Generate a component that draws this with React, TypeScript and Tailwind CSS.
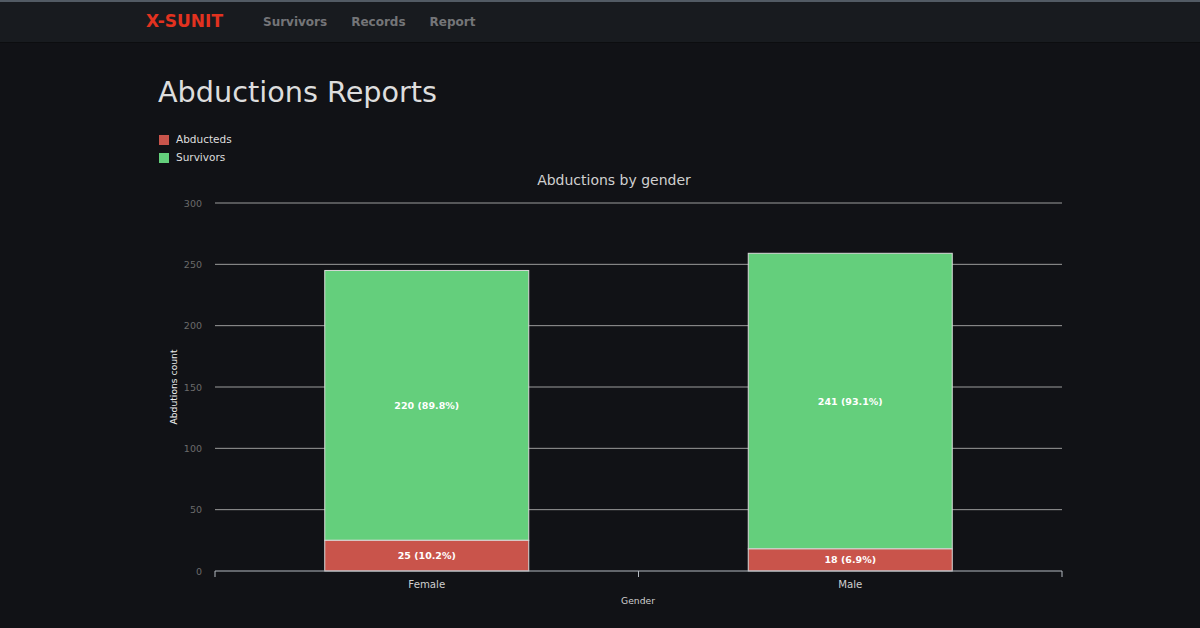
const font = "'DejaVu Sans', Verdana, sans-serif";

const data = [
  { gender: "Female", abducteds: 25, survivors: 220 },
  { gender: "Male", abducteds: 18, survivors: 241 },
];

const ticks = [0, 50, 100, 150, 200, 250, 300];

// chart geometry, in svg-local px
const left = 57;
const right = 904;
const base = 404;
const top = 36;
const yOf = (v: number) => base - (v * (base - top)) / 300;

const BarChart = () => {
  const bandW = (right - left) / data.length;
  const barW = 204;
  return (
    <svg width={910} height={461} className="block overflow-visible" style={{ fontFamily: font }}>
      <text x={456} y={18} textAnchor="middle" fontSize={14} fill="#d0d0d0">
        Abductions by gender
      </text>
      {ticks.map((t) => (
        <g key={t}>
          {t > 0 && <line x1={left} x2={right} y1={yOf(t)} y2={yOf(t)} stroke="#9c9c9c" strokeWidth={1} />}
          <text x={44} y={yOf(t) + 3.5} textAnchor="end" fontSize={9.5} fill="#6b6b6b">
            {t}
          </text>
        </g>
      ))}
      {data.map((d, i) => {
        const total = d.abducteds + d.survivors;
        const x = left + bandW * i + (bandW - barW) / 2;
        const yRed = yOf(d.abducteds);
        const yGreen = yOf(total);
        const pct = (n: number) => ((n / total) * 100).toFixed(1);
        return (
          <g key={d.gender}>
            <rect x={x} y={yGreen} width={barW} height={yRed - yGreen} fill="#64cf7c" stroke="#d9d9d9" strokeWidth={1} />
            <rect x={x} y={yRed} width={barW} height={base - yRed} fill="#c9544b" stroke="#d9d9d9" strokeWidth={1} />
            <text x={x + barW / 2} y={(yGreen + yRed) / 2 + 3.5} textAnchor="middle" fontSize={9.5} fontWeight="bold" fill="#fff">
              {d.survivors} ({pct(d.survivors)}%)
            </text>
            <text x={x + barW / 2} y={(yRed + base) / 2 + 3.5} textAnchor="middle" fontSize={9.5} fontWeight="bold" fill="#fff">
              {d.abducteds} ({pct(d.abducteds)}%)
            </text>
            <text x={x + barW / 2} y={421} textAnchor="middle" fontSize={10.2} fill="#cfcfcf">
              {d.gender}
            </text>
          </g>
        );
      })}
      <line x1={left} x2={right} y1={base} y2={base} stroke="#b4b9c0" strokeWidth={1} />
      {[left, (left + right) / 2, right].map((x) => (
        <line key={x} x1={x} x2={x} y1={base} y2={base + 6} stroke="#b4b9c0" strokeWidth={1} />
      ))}
      <text x={480} y={437} textAnchor="middle" fontSize={9.2} fill="#cfcfcf">
        Gender
      </text>
      <text
        x={16}
        y={220}
        transform="rotate(-90 16 220)"
        textAnchor="middle"
        dominantBaseline="middle"
        fontSize={9.2}
        fill="#eeeeee"
      >
        Abdutions count
      </text>
    </svg>
  );
};

const Legend = () => (
  <div className="flex flex-col">
    {[
      { label: "Abducteds", color: "bg-[#c9544b]" },
      { label: "Survivors", color: "bg-[#64cf7c]" },
    ].map((item) => (
      <div key={item.label} className="flex h-[18px] items-center pl-px">
        <span className={`h-[10px] w-[10px] ${item.color}`} />
        <span className="ml-[7px] text-[10.5px] text-[#dedede]">{item.label}</span>
      </div>
    ))}
  </div>
);

export default function App() {
  return (
    <div className="min-h-[628px] bg-[#111216]" style={{ fontFamily: font }}>
      <nav className="h-[43px] border-t-2 border-b border-t-[#525b64] border-b-[#0c0d0f] bg-[#181b1f]">
        <div className="mx-auto flex h-full w-[908px] items-center">
          <span className="text-[17px] font-bold text-[#e2321f]">X-SUNIT</span>
          <div className="ml-10 flex gap-6 text-[12px] font-bold text-[#747578]">
            <a>Survivors</a>
            <a>Records</a>
            <a>Report</a>
          </div>
        </div>
      </nav>
      <main className="mx-auto w-[908px] px-3">
        <h1 className="mt-8 text-[28.7px] leading-[34px] text-[#dddddd]">Abductions Reports</h1>
        <div className="mt-[22px]">
          <Legend />
        </div>
        <BarChart />
      </main>
    </div>
  );
}
